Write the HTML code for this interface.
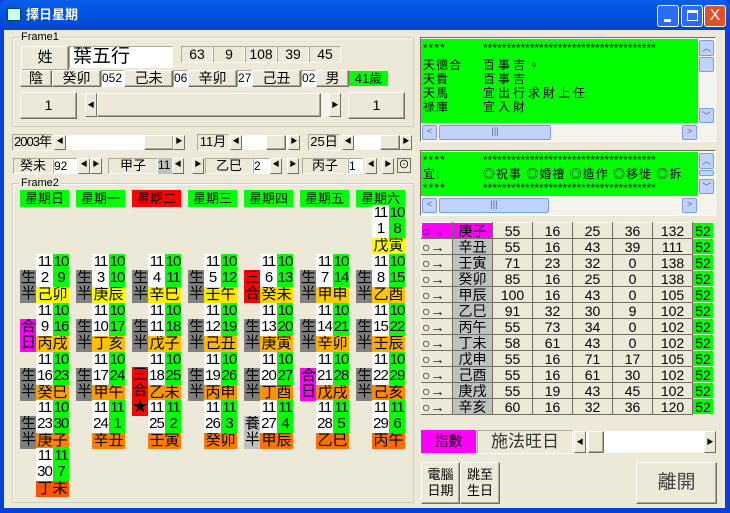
<!DOCTYPE html>
<html><head><meta charset="utf-8"><style>
*{margin:0;padding:0;box-sizing:border-box}
body{width:730px;height:513px;overflow:hidden;background:#0841D8;font-family:"Liberation Sans","Noto Sans CJK TC",sans-serif;position:relative}
.a{position:absolute}
#win{position:absolute;left:4px;top:30px;width:721px;height:478px;background:#ECE9D8}
.t{position:absolute;left:0;top:0;width:730px;height:30px;background:linear-gradient(#0A5FE8,#0054E3 40%,#0046C8);border-radius:7px 7px 0 0}
.r{position:absolute;background:#ECE9D8;border:1px solid;border-color:#fff #716F64 #716F64 #fff;box-shadow:inset -1px -1px 0 #ACA899;text-align:center;font-size:14px;color:#000;white-space:nowrap}
.s{position:absolute;border:1px solid;border-color:#ACA899 #fff #fff #ACA899;text-align:center;font-size:14px;line-height:14px;background:#ECE9D8;white-space:nowrap;overflow:hidden}
.wbox{position:absolute;background:#fff;font-size:13px;line-height:15px;overflow:hidden;border:1px solid;border-color:#ACA899 #fff #fff #ACA899;white-space:nowrap}
.fr{position:absolute;border:1px solid #D0D0BF;box-shadow:1px 1px 0 #fff inset}
.lg{position:absolute;background:#ECE9D8;font-size:11px;padding:0 2px;line-height:12px}
.sb{position:absolute;background:#F4F3EE;border:1px solid #ECE9D8}
.ar{position:absolute;top:0;width:12px;height:100%;background:#ECE9D8;border:1px solid;border-color:#fff #716F64 #716F64 #fff;font-size:7px;line-height:12px;text-align:center}
.hd{position:absolute;top:190px;width:49px;height:17px;background:#00FF00;font-size:13px;line-height:17px;text-align:center}
.d{position:absolute;width:49px;height:49px;font-size:15px;line-height:16px}
.d i{position:absolute;font-style:normal;text-align:center;letter-spacing:-1px;overflow:hidden}
.w{left:16px;top:0;width:17px;height:33px;background:#fff}
.g{left:33px;top:0;width:16px;height:33px;background:#00FF00}
.z{left:16px;top:33px;width:33px;height:16px;background:#FFC000;letter-spacing:0!important;font-size:15px}
.l{left:0;top:16px;width:16px;height:33px;background:#808080}
table{position:absolute;left:421px;top:222px;border-collapse:collapse;font-size:14px}
td{height:16px;padding:0;text-align:center;line-height:14px;border:1px solid;border-color:#fff #716F64 #716F64 #fff;background:#ECE9D8}
td.k{background:#C0C0C0;width:40px}
td.n{width:40px}
td.e{background:#00FF00;width:21px;border:1px solid #ECE9D8}
td.o{width:31px;text-align:left}
.gl{position:absolute;background:#00FF00;font-size:12px;line-height:14px;white-space:pre;overflow:hidden}
.gl span{position:absolute;white-space:pre;letter-spacing:1px}
.vs{position:absolute;background:#F4F3EE}
.xb{position:absolute;background:#C1D3FB;border:1px solid #7C9EE6;border-radius:2px;font-size:9px;text-align:center;color:#4D6185}
</style></head><body>
<div class="t"></div>
<div class="a" style="left:7px;top:8px;width:14px;height:13px;background:#CFE;border:1px solid #046"></div>
<div class="a" style="left:26px;top:7px;color:#fff;font-size:13px;font-weight:bold;line-height:16px">擇日星期</div>
<div class="a" style="left:657px;top:5px;width:22px;height:22px;background:#2A6CF5;border:1px solid #fff;border-radius:3px"><div class="a" style="left:6px;top:13px;width:7px;height:3px;background:#fff"></div></div>
<div class="a" style="left:681px;top:5px;width:22px;height:22px;background:#2A6CF5;border:1px solid #fff;border-radius:3px"><div class="a" style="left:5px;top:4px;width:11px;height:11px;border:1px solid #fff;border-top-width:3px"></div></div>
<div class="a" style="left:704px;top:5px;width:22px;height:22px;background:#E0502A;border:1px solid #fff;border-radius:3px;color:#fff;font-size:16px;text-align:center;line-height:20px">X</div>
<div id="win"></div>

<div class="fr" style="left:12px;top:37px;width:402px;height:90px"></div>
<div class="lg" style="left:19px;top:31px">Frame1</div>
<div class="r" style="left:21px;top:46px;width:48px;height:25px;line-height:22px;font-size:15px">姓</div>
<div class="wbox" style="left:69px;top:46px;width:104px;height:22px;font-size:19px;line-height:20px;padding-left:3px">葉五行</div>
<div class="s" style="left:181px;top:46px;width:32px;height:17px">63</div>
<div class="s" style="left:213px;top:46px;width:32px;height:17px">9</div>
<div class="s" style="left:245px;top:46px;width:32px;height:17px">108</div>
<div class="s" style="left:277px;top:46px;width:32px;height:17px">39</div>
<div class="s" style="left:309px;top:46px;width:32px;height:17px">45</div>
<div class="r" style="left:20px;top:70px;width:32px;height:17px;line-height:14px">陰</div>
<div class="r" style="left:52px;top:70px;width:49px;height:17px;line-height:14px">癸卯</div>
<div class="wbox" style="left:101px;top:70px;width:23px;height:17px;font-size:12px">052</div>
<div class="r" style="left:124px;top:70px;width:49px;height:17px;line-height:14px">己未</div>
<div class="wbox" style="left:173px;top:70px;width:15px;height:17px;font-size:12px">06</div>
<div class="r" style="left:188px;top:70px;width:49px;height:17px;line-height:14px">辛卯</div>
<div class="wbox" style="left:237px;top:70px;width:15px;height:17px;font-size:12px">27</div>
<div class="r" style="left:252px;top:70px;width:49px;height:17px;line-height:14px">己丑</div>
<div class="wbox" style="left:301px;top:70px;width:15px;height:17px;font-size:12px">02</div>
<div class="r" style="left:316px;top:70px;width:33px;height:17px;line-height:14px">男</div>
<div class="a" style="left:349px;top:71px;width:39px;height:15px;background:#00FF00;font-size:13px;text-align:center;line-height:15px">41歲</div>
<div class="r" style="left:20px;top:92px;width:57px;height:27px;line-height:24px">1</div>
<div class="sb" style="left:84px;top:92px;width:258px;height:26px"><div class="ar" style="left:0;line-height:24px">◀</div><div class="r" style="left:12px;top:0;width:224px;height:24px"></div><div class="ar" style="right:0;line-height:24px">▶</div></div>
<div class="r" style="left:348px;top:92px;width:57px;height:27px;line-height:24px">1</div>

<div class="s" style="left:12px;top:134px;width:41px;height:17px;font-size:13px;letter-spacing:-1px">2003年</div>
<div class="sb" style="left:53px;top:134px;width:133px;height:17px;background:#fff"><div class="ar" style="left:0">◀</div><div class="r" style="left:90px;top:0;width:30px;height:15px"></div><div class="ar" style="right:0">▶</div></div>
<div class="s" style="left:197px;top:134px;width:32px;height:17px;font-size:13px">11月</div>
<div class="sb" style="left:229px;top:134px;width:72px;height:17px;background:#fff"><div class="ar" style="left:0">◀</div><div class="r" style="left:36px;top:0;width:20px;height:15px"></div><div class="ar" style="right:0">▶</div></div>
<div class="s" style="left:308px;top:134px;width:32px;height:17px;font-size:13px">25日</div>
<div class="sb" style="left:341px;top:134px;width:72px;height:17px;background:#fff"><div class="ar" style="left:0">◀</div><div class="r" style="left:38px;top:0;width:20px;height:15px"></div><div class="ar" style="right:0">▶</div></div>

<div class="s" style="left:13px;top:158px;width:40px;height:16px;font-size:13px">癸未</div>
<div class="wbox" style="left:53px;top:158px;width:24px;height:16px;font-size:12px">92</div>
<div class="ar" style="left:78px;top:158px;height:16px">◀</div><div class="ar" style="left:90px;top:158px;height:16px">▶</div>
<div class="s" style="left:108px;top:158px;width:50px;height:16px;font-size:13px">甲子</div>
<div class="a" style="left:158px;top:158px;width:14px;height:16px;background:#C0C0C0;font-size:12px">11</div>
<div class="ar" style="left:172px;top:158px;height:16px">◀</div><div class="ar" style="left:192px;top:158px;height:16px">▶</div>
<div class="s" style="left:205px;top:158px;width:48px;height:16px;font-size:13px">乙巳</div>
<div class="wbox" style="left:253px;top:158px;width:17px;height:16px;font-size:12px">2</div>
<div class="ar" style="left:270px;top:158px;height:16px">◀</div><div class="ar" style="left:287px;top:158px;height:16px">▶</div>
<div class="s" style="left:302px;top:158px;width:46px;height:16px;font-size:13px">丙子</div>
<div class="wbox" style="left:348px;top:158px;width:15px;height:16px;font-size:12px">1</div>
<div class="ar" style="left:365px;top:158px;height:16px">◀</div><div class="ar" style="left:382px;top:158px;height:16px">▶</div>
<div class="a" style="left:397px;top:158px;width:14px;height:15px;border:1px solid #716F64;font-size:11px;text-align:center;line-height:13px">⊙</div>

<div class="fr" style="left:12px;top:183px;width:402px;height:320px"></div>
<div class="lg" style="left:19px;top:177px">Frame2</div>
<div class="hd" style="left:20px">星期日</div>
<div class="hd" style="left:76px">星期一</div>
<div class="hd" style="left:132px;background:#FF0000">星期二</div>
<div class="hd" style="left:188px">星期三</div>
<div class="hd" style="left:244px">星期四</div>
<div class="hd" style="left:300px">星期五</div>
<div class="hd" style="left:356px">星期六</div>

<div class="d" style="left:356px;top:205px"><i class="w">11<br>1</i><i class="g">10<br>8</i><i class="z" style="background:#FFFF00">戊寅</i></div>

<div class="d" style="left:20px;top:254px"><i class="w">11<br>2</i><i class="g">10<br>9</i><i class="z" style="background:#FFFF00">己卯</i><i class="l">生<br>半</i></div>
<div class="d" style="left:76px;top:254px"><i class="w">11<br>3</i><i class="g">10<br>10</i><i class="z" style="background:#FFFF00">庚辰</i><i class="l">生<br>半</i></div>
<div class="d" style="left:132px;top:254px"><i class="w">11<br>4</i><i class="g">10<br>11</i><i class="z" style="background:#FFEE00">辛巳</i><i class="l">生<br>半</i></div>
<div class="d" style="left:188px;top:254px"><i class="w">11<br>5</i><i class="g">10<br>12</i><i class="z" style="background:#FFE600">壬午</i><i class="l">生<br>半</i></div>
<div class="d" style="left:244px;top:254px"><i class="w">11<br>6</i><i class="g">10<br>13</i><i class="z" style="background:#FFD800">癸未</i><i class="l" style="background:#FF0000">三<br>合</i></div>
<div class="d" style="left:300px;top:254px"><i class="w">11<br>7</i><i class="g">10<br>14</i><i class="z" style="background:#FFCC00">甲申</i><i class="l">生<br>半</i></div>
<div class="d" style="left:356px;top:254px"><i class="w">11<br>8</i><i class="g">10<br>15</i><i class="z" style="background:#FFC400">乙酉</i><i class="l">生<br>半</i></div>

<div class="d" style="left:20px;top:303px"><i class="w">11<br>9</i><i class="g">10<br>16</i><i class="z">丙戌</i><i class="l" style="background:#FF00FF">合<br>日</i></div>
<div class="d" style="left:76px;top:303px"><i class="w">11<br>10</i><i class="g">10<br>17</i><i class="z">丁亥</i><i class="l">生<br>半</i></div>
<div class="d" style="left:132px;top:303px"><i class="w">11<br>11</i><i class="g">10<br>18</i><i class="z">戊子</i><i class="l">生<br>半</i></div>
<div class="d" style="left:188px;top:303px"><i class="w">11<br>12</i><i class="g">10<br>19</i><i class="z" style="background:#FFB800">己丑</i><i class="l">生<br>半</i></div>
<div class="d" style="left:244px;top:303px"><i class="w">11<br>13</i><i class="g">10<br>20</i><i class="z" style="background:#FFB400">庚寅</i><i class="l">生<br>半</i></div>
<div class="d" style="left:300px;top:303px"><i class="w">11<br>14</i><i class="g">10<br>21</i><i class="z" style="background:#FFB000">辛卯</i><i class="l">生<br>半</i></div>
<div class="d" style="left:356px;top:303px"><i class="w">11<br>15</i><i class="g">10<br>22</i><i class="z" style="background:#FFAC00">壬辰</i><i class="l">生<br>半</i></div>

<div class="d" style="left:20px;top:352px"><i class="w">11<br>16</i><i class="g">10<br>23</i><i class="z" style="background:#FFA000">癸巳</i><i class="l">生<br>半</i></div>
<div class="d" style="left:76px;top:352px"><i class="w">11<br>17</i><i class="g">10<br>24</i><i class="z" style="background:#FF9C00">甲午</i><i class="l">生<br>半</i></div>
<div class="d" style="left:132px;top:352px"><i class="w">11<br>18</i><i class="g">10<br>25</i><i class="z" style="background:#FF9800">乙未</i></div>
<div class="d" style="left:188px;top:352px"><i class="w">11<br>19</i><i class="g">10<br>26</i><i class="z" style="background:#FF9400">丙申</i><i class="l">生<br>半</i></div>
<div class="d" style="left:244px;top:352px"><i class="w">11<br>20</i><i class="g">10<br>27</i><i class="z" style="background:#FF9000">丁酉</i><i class="l">生<br>半</i></div>
<div class="d" style="left:300px;top:352px"><i class="w">11<br>21</i><i class="g">10<br>28</i><i class="z" style="background:#FF8C00">戊戌</i><i class="l" style="background:#FF00FF">合<br>日</i></div>
<div class="d" style="left:356px;top:352px"><i class="w">11<br>22</i><i class="g">10<br>29</i><i class="z" style="background:#FF8800">己亥</i><i class="l">生<br>半</i></div>
<div class="a" style="left:132px;top:367px;width:16px;height:49px;background:#FF0000;font-size:15px;line-height:16px;text-align:center">三<br>合<br>★</div>

<div class="d" style="left:20px;top:400px"><i class="w">11<br>23</i><i class="g">10<br>30</i><i class="z" style="background:#FF8400">庚子</i><i class="l">生<br>半</i></div>
<div class="d" style="left:76px;top:400px"><i class="w">11<br>24</i><i class="g">11<br>1</i><i class="z" style="background:#FF8000">辛丑</i></div>
<div class="d" style="left:132px;top:400px"><i class="w">11<br>25</i><i class="g">11<br>2</i><i class="z" style="background:#FF7C00">壬寅</i></div>
<div class="d" style="left:188px;top:400px"><i class="w">11<br>26</i><i class="g">11<br>3</i><i class="z" style="background:#FF7800">癸卯</i></div>
<div class="d" style="left:244px;top:400px"><i class="w">11<br>27</i><i class="g">11<br>4</i><i class="z" style="background:#FF7400">甲辰</i><i class="l" style="background:#C0C0C0">養<br>半</i></div>
<div class="d" style="left:300px;top:400px"><i class="w">11<br>28</i><i class="g">11<br>5</i><i class="z" style="background:#FF7000">乙巳</i></div>
<div class="d" style="left:356px;top:400px"><i class="w">11<br>29</i><i class="g">11<br>6</i><i class="z" style="background:#FF6C00">丙午</i></div>

<div class="d" style="left:20px;top:448px"><i class="w">11<br>30</i><i class="g">11<br>7</i><i class="z" style="background:#FF5500">丁未</i></div>

<div class="a" style="left:420px;top:37px;width:296px;height:105px;border:1px solid;border-color:#716F64 #fff #fff #716F64;background:#F4F3EE"></div>
<div class="gl" style="left:421px;top:39px;width:277px;height:84px">
<span style="left:2px;top:2px">****</span><span style="left:62px;top:2px;letter-spacing:0">*************************************</span>
<span style="left:2px;top:19px">天德合</span><span style="left:62px;top:19px;letter-spacing:3px">百事吉。</span>
<span style="left:2px;top:33px">天貴</span><span style="left:62px;top:33px;letter-spacing:3px">百事吉</span>
<span style="left:2px;top:47px">天馬</span><span style="left:62px;top:47px;letter-spacing:3px">宜出行求財上任</span>
<span style="left:2px;top:61px">祿庫</span><span style="left:62px;top:61px;letter-spacing:3px">宜入財</span>
</div>
<div class="xb" style="left:699px;top:40px;width:15px;height:16px">︿</div>
<div class="xb" style="left:699px;top:57px;width:15px;height:15px"></div>
<div class="xb" style="left:699px;top:108px;width:15px;height:15px">﹀</div>
<div class="xb" style="left:422px;top:125px;width:15px;height:15px">&lt;</div>
<div class="xb" style="left:439px;top:125px;width:112px;height:15px">|||</div>
<div class="xb" style="left:682px;top:125px;width:15px;height:15px">&gt;</div>

<div class="a" style="left:420px;top:150px;width:296px;height:66px;border:1px solid;border-color:#716F64 #fff #fff #716F64;background:#F4F3EE"></div>
<div class="gl" style="left:421px;top:152px;width:277px;height:44px">
<span style="left:2px;top:1px">****</span><span style="left:62px;top:1px;letter-spacing:0">*************************************</span>
<span style="left:2px;top:15px">宜:</span><span style="left:62px;top:15px">◎祝事 ◎婚禮 ◎造作 ◎移徙 ◎拆</span>
<span style="left:2px;top:29px">****</span><span style="left:62px;top:29px;letter-spacing:0">*************************************</span>
</div>
<div class="xb" style="left:699px;top:153px;width:15px;height:16px">︿</div>
<div class="xb" style="left:699px;top:170px;width:15px;height:6px"></div>
<div class="xb" style="left:699px;top:179px;width:15px;height:15px">﹀</div>
<div class="xb" style="left:422px;top:198px;width:15px;height:15px">&lt;</div>
<div class="xb" style="left:439px;top:198px;width:110px;height:15px">|||</div>
<div class="xb" style="left:682px;top:198px;width:15px;height:15px">&gt;</div>

<table>
<tr><td class="o" style="background:#FF00FF">○→</td><td class="k" style="background:#FF00FF">庚子</td><td class="n">55</td><td class="n">16</td><td class="n">25</td><td class="n">36</td><td class="n">132</td><td class="e">52</td></tr>
<tr><td class="o">○→</td><td class="k">辛丑</td><td class="n">55</td><td class="n">16</td><td class="n">43</td><td class="n">39</td><td class="n">111</td><td class="e">52</td></tr>
<tr><td class="o">○→</td><td class="k">壬寅</td><td class="n">71</td><td class="n">23</td><td class="n">32</td><td class="n">0</td><td class="n">138</td><td class="e">52</td></tr>
<tr><td class="o">○→</td><td class="k">癸卯</td><td class="n">85</td><td class="n">16</td><td class="n">25</td><td class="n">0</td><td class="n">138</td><td class="e">52</td></tr>
<tr><td class="o">○→</td><td class="k">甲辰</td><td class="n">100</td><td class="n">16</td><td class="n">43</td><td class="n">0</td><td class="n">105</td><td class="e">52</td></tr>
<tr><td class="o">○→</td><td class="k">乙巳</td><td class="n">91</td><td class="n">32</td><td class="n">30</td><td class="n">9</td><td class="n">102</td><td class="e">52</td></tr>
<tr><td class="o">○→</td><td class="k">丙午</td><td class="n">55</td><td class="n">73</td><td class="n">34</td><td class="n">0</td><td class="n">102</td><td class="e">52</td></tr>
<tr><td class="o">○→</td><td class="k">丁未</td><td class="n">58</td><td class="n">61</td><td class="n">43</td><td class="n">0</td><td class="n">102</td><td class="e">52</td></tr>
<tr><td class="o">○→</td><td class="k">戊申</td><td class="n">55</td><td class="n">16</td><td class="n">71</td><td class="n">17</td><td class="n">105</td><td class="e">52</td></tr>
<tr><td class="o">○→</td><td class="k">己酉</td><td class="n">55</td><td class="n">16</td><td class="n">61</td><td class="n">30</td><td class="n">102</td><td class="e">52</td></tr>
<tr><td class="o">○→</td><td class="k">庚戌</td><td class="n">55</td><td class="n">19</td><td class="n">43</td><td class="n">45</td><td class="n">102</td><td class="e">52</td></tr>
<tr><td class="o">○→</td><td class="k">辛亥</td><td class="n">60</td><td class="n">16</td><td class="n">32</td><td class="n">36</td><td class="n">120</td><td class="e">52</td></tr>
</table>

<div class="a" style="left:421px;top:430px;width:55px;height:23px;background:#FF00FF;font-size:14px;text-align:center;line-height:23px">指數</div>
<div class="s" style="left:477px;top:430px;width:96px;height:24px;font-size:17px;line-height:22px;color:#333">施法旺日</div>
<div class="sb" style="left:573px;top:430px;width:144px;height:24px;background:#fff"><div class="ar" style="left:0;line-height:22px">◀</div><div class="r" style="left:14px;top:0;width:16px;height:22px"></div><div class="ar" style="right:0;line-height:22px">▶</div></div>
<div class="r" style="left:421px;top:462px;width:39px;height:42px;font-size:13px;line-height:16px;padding-top:4px">電腦<br>日期</div>
<div class="r" style="left:460px;top:462px;width:40px;height:42px;font-size:13px;line-height:16px;padding-top:4px">跳至<br>生日</div>
<div class="r" style="left:636px;top:462px;width:81px;height:42px;font-size:19px;line-height:40px;color:#444">離開</div>
</body></html>
